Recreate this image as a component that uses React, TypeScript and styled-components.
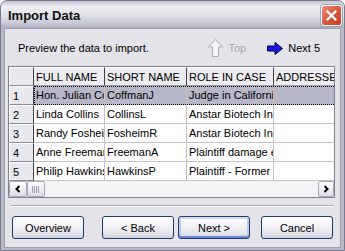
import React from 'react';
import styled, { createGlobalStyle } from 'styled-components';

const GlobalStyle = createGlobalStyle`
  html, body {
    margin: 0;
    padding: 0;
    overflow: hidden;
    background: #ffffff;
  }
  body {
    font-family: "Liberation Sans", Arial, sans-serif;
    font-size: 11px;
    color: #000;
  }
`;

const Window = styled.div`
  width: 345px;
  height: 251px;
  box-sizing: border-box;
  display: flex;
  flex-direction: column;
  background: #b9b9c8;
  border: 1px solid #7a7a8e;
  border-radius: 7px 7px 0 0;
  overflow: hidden;
`;

const TitleBar = styled.div`
  height: 27px;
  flex-shrink: 0;
  display: flex;
  align-items: center;
  justify-content: space-between;
  padding: 0 2px 0 7px;
  background: linear-gradient(
    to bottom,
    #c2c2d0 0%,
    #eeeef4 22%,
    #e2e2ea 50%,
    #cdcdda 78%,
    #aeaec0 100%
  );
`;

const Title = styled.span`
  font-family: "Liberation Sans", Arial, sans-serif;
  font-weight: bold;
  font-size: 13px;
  color: #101010;
  padding-top: 2px;
`;

const CloseButton = styled.div`
  width: 21px;
  height: 21px;
  box-sizing: border-box;
  border: 1px solid #ffffff;
  border-radius: 3px;
  background: linear-gradient(135deg, #ec8f7c 0%, #d85d45 45%, #c23a22 100%);
  display: flex;
  align-items: center;
  justify-content: center;
  margin-top: 1px;
  box-shadow: 0 0 0 1px #a0a0b0;
`;

const Client = styled.div`
  flex: 1;
  display: flex;
  flex-direction: column;
  margin: 0 3px 2px 3px;
  background: #e3e3e9;
  border: 1px solid #9c9cac;
`;

const PromptRow = styled.div`
  height: 20px;
  margin-top: 9px;
  display: flex;
  align-items: center;
  padding-left: 13px;
`;

const Prompt = styled.span`
  flex: 1;
`;

const NavLink = styled.span<{ $disabled?: boolean }>`
  display: flex;
  align-items: center;
  gap: 5px;
  color: ${p => (p.$disabled ? '#a6a6ae' : '#000')};
  margin-right: ${p => (p.$disabled ? '21px' : '20px')};
`;

const GridBox = styled.div`
  margin: 8px 0 0 3px;
  width: 327px;
  height: 132px;
  box-sizing: border-box;
  border: 1px solid #7f7f8f;
  background: #e3e3e9;
  display: flex;
  flex-direction: column;
  overflow: hidden;
`;

const Row = styled.div<{ $height: number }>`
  display: flex;
  height: ${p => p.$height}px;
  flex-shrink: 0;
`;

const RowHeader = styled.div`
  width: 25px;
  flex-shrink: 0;
  box-sizing: border-box;
  background: #e8e8ee;
  border-top: 1px solid #ffffff;
  border-left: 1px solid #ffffff;
  border-right: 1px solid #404048;
  border-bottom: 1px solid #8c8c98;
  padding-left: 3px;
  display: flex;
  align-items: center;
`;

const HeadCell = styled.div<{ $w: number }>`
  width: ${p => p.$w}px;
  flex-shrink: 0;
  box-sizing: border-box;
  background: #ececf1;
  border-top: 1px solid #ffffff;
  border-right: 1px solid #404048;
  border-bottom: 1px solid #9c9ca8;
  padding-left: 2px;
  display: flex;
  align-items: center;
  white-space: nowrap;
  overflow: hidden;
`;

const DataCells = styled.div<{ $selected?: boolean }>`
  display: flex;
  background: ${p => (p.$selected ? '#b7b7c7' : '#ffffff')};
  outline: ${p => (p.$selected ? '1px dotted #000' : 'none')};
  outline-offset: -1px;
`;

const Cell = styled.div<{ $w: number }>`
  width: ${p => p.$w}px;
  flex-shrink: 0;
  box-sizing: border-box;
  border-right: 1px solid #c4c4c8;
  border-bottom: 1px solid #c4c4c8;
  padding-left: 2px;
  display: flex;
  align-items: center;
  white-space: nowrap;
  overflow: hidden;
`;

const ScrollBar = styled.div`
  height: 16px;
  display: flex;
  background: #f3f3f6;
  flex-shrink: 0;
`;

const ScrollButton = styled.div<{ $w: number }>`
  width: ${p => p.$w}px;
  height: 16px;
  box-sizing: border-box;
  border: 1px solid #a8a8b8;
  border-radius: 2px;
  background: linear-gradient(to bottom, #ffffff, #dcdce6);
  display: flex;
  align-items: center;
  justify-content: center;
  flex-shrink: 0;
`;

const Track = styled.div`
  flex: 1;
`;

const Separator = styled.div`
  margin: 7px 6px 0 6px;
  height: 0;
  border-top: 1px solid #a8a8b4;
  border-bottom: 1px solid #ffffff;
`;

const ButtonRow = styled.div`
  display: flex;
  margin: 9px 0 0 7px;
`;

const Button = styled.div<{ $gap: number; $default?: boolean }>`
  width: 72px;
  height: 23px;
  box-sizing: border-box;
  margin-right: ${p => p.$gap}px;
  border: 1px solid #1c3c6c;
  border-radius: 3px;
  background: linear-gradient(to bottom, #ffffff 0%, #f2f2f6 45%, #e2e2ea 80%, #cdcdd9 100%);
  display: flex;
  align-items: center;
  justify-content: center;
  box-shadow: ${p =>
    p.$default ? 'inset 0 -2px 0 #6a8ad8, inset 0 2px 0 #cfdcf6, inset 2px 0 0 #b6c8f0, inset -2px 0 0 #b6c8f0' : 'none'};
`;

const cols = [
  { label: 'FULL NAME', w: 71 },
  { label: 'SHORT NAME', w: 82 },
  { label: 'ROLE IN CASE', w: 87 },
  { label: 'ADDRESSES', w: 80 }
];

const rows = [
  ['Hon. Julian Coffman', 'CoffmanJ', 'Judge in California', ''],
  ['Linda Collins', 'CollinsL', 'Anstar Biotech Inc', ''],
  ['Randy Fosheim', 'FosheimR', 'Anstar Biotech Inc', ''],
  ['Anne Freeman', 'FreemanA', 'Plaintiff damage expert', ''],
  ['Philip Hawkins', 'HawkinsP', 'Plaintiff - Former', '']
];

const UpArrow = () => (
  <svg width="15" height="18" viewBox="0 0 15 18">
    <polygon
      points="7.5,0.5 14.5,8 10.5,8 10.5,17.5 4.5,17.5 4.5,8 0.5,8"
      fill="#f4f4f8"
      stroke="#a8a8b2"
      strokeWidth="1"
    />
  </svg>
);

const RightArrow = () => (
  <svg width="16" height="13" viewBox="0 0 16 13">
    <polygon
      points="0.5,4 8,4 8,0.5 15.5,6.5 8,12.5 8,9 0.5,9"
      fill="#1414e6"
      stroke="#00003c"
      strokeWidth="1"
    />
  </svg>
);

const Chevron = ({ dir }: { dir: 'left' | 'right' }) => (
  <svg width="8" height="8" viewBox="0 0 8 8">
    <polyline
      points={dir === 'left' ? '5.5,1 2.5,4 5.5,7' : '2.5,1 5.5,4 2.5,7'}
      fill="none"
      stroke="#000"
      strokeWidth="2"
    />
  </svg>
);

const Grip = () => (
  <svg width="8" height="7" viewBox="0 0 8 7">
    {[0.5, 2.5, 4.5, 6.5].map(x => (
      <line key={x} x1={x} y1="0" x2={x} y2="7" stroke="#a0a0b4" strokeWidth="1" />
    ))}
  </svg>
);

const CloseX = () => (
  <svg width="11" height="11" viewBox="0 0 11 11">
    <path d="M1.5 1.5 L9.5 9.5 M9.5 1.5 L1.5 9.5" stroke="#ffffff" strokeWidth="2.2" strokeLinecap="square" />
  </svg>
);

const App = () => {
  return (
    <>
      <GlobalStyle />
      <Window>
        <TitleBar>
          <Title>Import Data</Title>
          <CloseButton>
            <CloseX />
          </CloseButton>
        </TitleBar>
        <Client>
          <PromptRow>
            <Prompt>Preview the data to import.</Prompt>
            <NavLink $disabled>
              <UpArrow />
              Top
            </NavLink>
            <NavLink>
              <RightArrow />
              Next 5
            </NavLink>
          </PromptRow>
          <GridBox>
            <Row $height={19}>
              <RowHeader />
              {cols.map(c => (
                <HeadCell key={c.label} $w={c.w}>
                  {c.label}
                </HeadCell>
              ))}
            </Row>
            {rows.map((r, i) => (
              <Row key={i} $height={19}>
                <RowHeader>{i + 1}</RowHeader>
                <DataCells $selected={i === 0}>
                  {r.map((v, j) => (
                    <Cell key={j} $w={cols[j].w}>
                      {v}
                    </Cell>
                  ))}
                </DataCells>
              </Row>
            ))}
            <ScrollBar>
              <ScrollButton $w={18}>
                <Chevron dir="left" />
              </ScrollButton>
              <ScrollButton $w={18}>
                <Grip />
              </ScrollButton>
              <Track />
              <ScrollButton $w={16}>
                <Chevron dir="right" />
              </ScrollButton>
            </ScrollBar>
          </GridBox>
          <Separator />
          <ButtonRow>
            <Button $gap={18}>Overview</Button>
            <Button $gap={4}>&lt; Back</Button>
            <Button $gap={11} $default>
              Next &gt;
            </Button>
            <Button $gap={0}>Cancel</Button>
          </ButtonRow>
        </Client>
      </Window>
    </>
  );
};

export default App;
